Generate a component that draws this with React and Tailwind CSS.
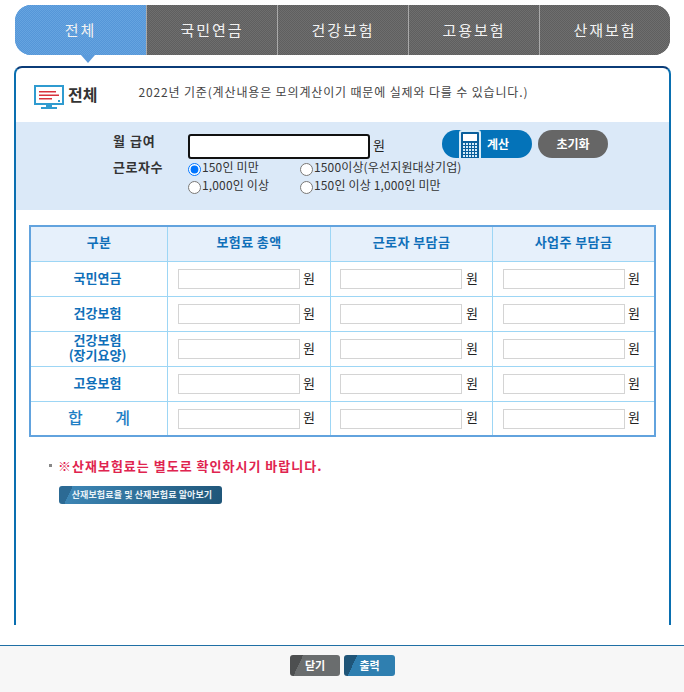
import React from 'react';

const tabs = ['국민연금', '건강보험', '고용보험', '산재보험'];

const rows = [
  { label: '국민연금', h: 'h-[35px]' },
  { label: '건강보험', h: 'h-[35px]' },
  { label: '건강보험', sub: '(장기요양)', h: 'h-[35px]' },
  { label: '고용보험', h: 'h-[35px]' },
  { label: '합계', h: 'h-[34px]', total: true },
];

const MonitorIcon = () => (
  <svg width="30" height="25" viewBox="0 0 30 25" className="block">
    <rect x="1" y="1" width="28" height="18" fill="#fff" stroke="#2f9bd0" strokeWidth="2" />
    <rect x="5" y="6" width="17" height="1.5" fill="#d8323c" />
    <rect x="5" y="9.5" width="20" height="1.5" fill="#d8323c" />
    <rect x="5" y="13" width="13" height="1.5" fill="#d8323c" />
    <rect x="24" y="15" width="2" height="2" fill="#2f9bd0" />
    <rect x="12" y="20" width="6" height="2" fill="#2f9bd0" />
    <rect x="7" y="22" width="16" height="2" fill="#2f9bd0" />
  </svg>
);

const CalcIcon = () => (
  <svg width="22" height="28" viewBox="0 0 22 28" className="block">
    <path d="M1 28V3a2 2 0 0 1 2-2h16a2 2 0 0 1 2 2v25" fill="#0a5f9c" stroke="#d8ecf8" strokeWidth="2" />
    <rect x="4" y="4" width="14" height="7" fill="#fff" />
    {[13, 16, 19, 22, 25].map(y =>
      [4, 7, 10, 13, 16].map(x => <rect key={`${x}-${y}`} x={x} y={y} width="2" height="2" fill="#d8ecf8" />)
    )}
  </svg>
);

const Won = ({ className = '' }) => <span className={`text-[13px] leading-none text-[#222] ${className}`}>원</span>;

const AmountCell = ({ pad = 'pl-[10px]', gap = 'ml-[3px]' }) => (
  <div className={`flex items-center border-l border-[#9dd6f5] ${pad}`}>
    <input type="text" readOnly className="h-[20px] w-[122px] border border-[#d4d4d4] bg-white" />
    <Won className={`${gap} pb-[4px]`} />
  </div>
);

const Radio = ({ label, checked }) => (
  <label className="flex h-[18px] items-center text-[12px] leading-none tracking-[0.15px] text-[#333]">
    <input type="radio" name="workers" defaultChecked={checked} className="m-0 mr-[1px] h-[13px] w-[13px]" />
    <span className="pb-[4px]">{label}</span>
  </label>
);

export default function App() {
  return (
    <div className="relative h-[692px] w-[684px] overflow-hidden bg-white font-['Noto_Sans_CJK_KR','Liberation_Sans',sans-serif]">
      {/* 탭 */}
      <div className="ml-[15px] mt-[5px] flex h-[50px] w-[655px] overflow-hidden rounded-[16px] text-[15px] tracking-[2px] text-[#f2f2f2]">
        <div className="flex w-[131px] items-center justify-center bg-[#5b9bdc] bg-[repeating-conic-gradient(#5596d8_0_25%,#66a4e0_0_50%)] bg-[length:2px_2px]">전체</div>
        {tabs.map(tab => (
          <div
            key={tab}
            className="flex flex-1 items-center justify-center border-l border-[#a9a9a9] bg-[#666] bg-[repeating-conic-gradient(#5f5f5f_0_25%,#6e6e6e_0_50%)] bg-[length:2px_2px]"
          >
            {tab}
          </div>
        ))}
      </div>
      <div className="absolute left-[81px] top-[55px] h-0 w-0 border-x-[7px] border-t-[8px] border-x-transparent border-t-[#5b9bdc]" />

      {/* 본문 */}
      <div className="ml-[14px] mt-[11px] h-[559px] w-[657px] rounded-t-[8px] border-x-2 border-t-2 border-x-[#0a6fb0] border-t-[#0b3c78]">
        <div className="flex h-[54px] items-center pl-[18px] pt-[4px]">
          <MonitorIcon />
          <span className="ml-[4px] pb-[6px] text-[16px] font-bold leading-none text-[#333]">전체</span>
          <span className="ml-[41px] pb-[11px] text-[12px] leading-none tracking-[0.85px] text-[#444]">
            2022년 기준(계산내용은 모의계산이기 때문에 실제와 다를 수 있습니다.)
          </span>
        </div>

        {/* 입력 영역 */}
        <div className="h-[88px] bg-[#dbe9f8] pl-[97px] pt-[8px]">
          <div className="flex h-[30px] items-start">
            <span className="w-[75px] pt-[1px] text-[13px] font-bold tracking-[1px] text-[#333]">월 급여</span>
            <input type="text" className="mt-[4px] h-[25px] w-[182px] rounded-[3px] border-2 border-[#111] bg-white" />
            <Won className="ml-[3px] mt-[8px]" />
            <button className="relative ml-[57px] flex h-[28px] w-[90px] items-center overflow-hidden rounded-full bg-[#0473b9] pl-[45px] text-[12px] font-bold text-white">
              <span className="absolute left-[17px] top-0"><CalcIcon /></span>
              계산
            </button>
            <button className="ml-[6px] flex h-[28px] w-[70px] items-center justify-center rounded-full bg-[#666] text-[12px] font-bold text-white">
              초기화
            </button>
          </div>
          <div className="flex">
            <span className="w-[75px] text-[13px] font-bold leading-[14px] tracking-[0.5px] text-[#333]">근로자수</span>
            <div className="grid grid-cols-[112px_auto]">
              <Radio label="150인 미만" checked />
              <Radio label="1500이상(우선지원대상기업)" />
              <Radio label="1,000인 이상" />
              <Radio label="150인 이상 1,000인 미만" />
            </div>
          </div>
        </div>

        {/* 결과 표 */}
        <div className="ml-[13px] mt-[15px] w-[627px] border-[2px] border-[#62a3de] text-[#0f6fb9]">
          <div className="grid h-[34px] grid-cols-[136px_163px_162px_162px] items-stretch bg-[#e6f0fb] text-[13px] font-bold tracking-[0.4px]">
            {['구분', '보험료 총액', '근로자 부담금', '사업주 부담금'].map((title, i) => (
              <div key={title} className={`flex items-center justify-center pb-[4px] ${i > 0 ? 'border-l border-[#9dd6f5]' : ''}`}>
                {title}
              </div>
            ))}
          </div>
          {rows.map(row => (
            <div key={row.label + (row.sub || '')} className={`grid grid-cols-[136px_163px_162px_162px] border-t border-[#9dd6f5] ${row.h}`}>
              {row.total ? (
                <div className="flex items-center justify-between px-[37px] pb-[4px] text-[16px] font-medium leading-none text-[#1f7fc4]">
                  <span>합</span>
                  <span>계</span>
                </div>
              ) : (
                <div className="flex flex-col items-center justify-center pb-[4px] pr-[3px] text-[13px] font-bold leading-[15px]">
                  <span>{row.label}</span>
                  {row.sub && <span>{row.sub}</span>}
                </div>
              )}
              <AmountCell />
              <AmountCell pad="pl-[9px]" gap="ml-[4px]" />
              <AmountCell />
            </div>
          ))}
        </div>

        {/* 안내 */}
        <div className="ml-[33px] mt-[19px] flex items-center">
          <span className="h-[3px] w-[3px] bg-[#888]" />
          <span className="ml-[6px] text-[13px] font-bold tracking-[1px] text-[#e0244f]">※산재보험료는 별도로 확인하시기 바랍니다.</span>
        </div>
        <button className="ml-[43px] mt-[10px] flex h-[18px] w-[163px] items-center justify-center rounded-[3px] bg-[linear-gradient(115deg,#2c6a94_8%,#3c85b4_8%,#1f5578)] pl-[3px] text-[9px] font-bold tracking-[0.1px] text-[#eaf2f7]">
          산재보험료율 및 산재보험료 알아보기
        </button>
      </div>

      {/* 하단 */}
      <div className="mt-[20px] flex h-[47px] justify-center gap-[4px] border-t border-[#1f6fa5] bg-[#f7f7f7] pl-[1px] pt-[9px]">
        <button className="flex h-[21px] w-[50px] items-center justify-center rounded-[3px] bg-[linear-gradient(115deg,#4d4f50_22%,#6a6d6e_22%)] text-[11px] font-bold text-white">닫기</button>
        <button className="flex h-[21px] w-[51px] items-center justify-center rounded-[3px] bg-[linear-gradient(115deg,#1f5578_22%,#2f7fb0_22%)] text-[11px] font-bold text-white">출력</button>
      </div>
    </div>
  );
}
